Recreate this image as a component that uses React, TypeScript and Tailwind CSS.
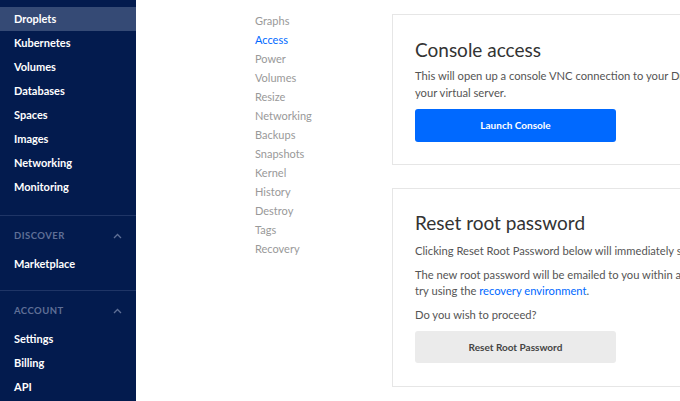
import React from "react";

const mainItems = ["Droplets", "Kubernetes", "Volumes", "Databases", "Spaces", "Images", "Networking", "Monitoring"];
const subNav = ["Graphs", "Access", "Power", "Volumes", "Resize", "Networking", "Backups", "Snapshots", "Kernel", "History", "Destroy", "Tags", "Recovery"];

function Chevron() {
  return (
    <svg width="9" height="6" viewBox="0 0 9 6" fill="none" className="mr-[14px]">
      <path d="M1 5 L4.5 1.5 L8 5" stroke="#5f6f96" strokeWidth="1.3" />
    </svg>
  );
}

function SideItem({ label, active }: { label: string; active?: boolean }) {
  return (
    <div
      className={`h-6 shrink-0 flex items-center pl-[14px] text-[11px] font-bold text-white ${active ? "bg-[#354a75]" : ""}`}
    >
      {label}
    </div>
  );
}

export default function App() {
  return (
    <div
      className="w-[680px] h-[401px] overflow-hidden flex bg-white"
      style={{ fontFamily: "Lato, 'Open Sans', sans-serif" }}
    >
      <aside className="w-[136px] shrink-0 bg-[#031b4e] pt-[7px] flex flex-col">
        {mainItems.map((m, i) => (
          <SideItem key={m} label={m} active={i === 0} />
        ))}
        <div className="shrink-0 mt-[16px] border-t border-[#1f3566]" />
        <div className="shrink-0 h-[36px] pt-[4px] flex items-center justify-between pl-[14px]">
          <span className="text-[9.5px] font-bold tracking-[0.05em] text-[#5f6f96]">DISCOVER</span>
          <Chevron />
        </div>
        <SideItem label="Marketplace" />
        <div className="shrink-0 mt-[14px] border-t border-[#1f3566]" />
        <div className="shrink-0 h-[36px] pt-[4px] flex items-center justify-between pl-[14px]">
          <span className="text-[9.5px] font-bold tracking-[0.05em] text-[#5f6f96]">ACCOUNT</span>
          <Chevron />
        </div>
        <SideItem label="Settings" />
        <SideItem label="Billing" />
        <SideItem label="API" />
      </aside>

      <nav className="w-[256px] shrink-0 pl-[119px] pt-[12px] flex flex-col">
        {subNav.map((s) => (
          <div
            key={s}
            className={`h-[19px] shrink-0 flex items-center text-[11px] ${s === "Access" ? "text-[#0069ff]" : "text-[#999999]"}`}
          >
            {s}
          </div>
        ))}
      </nav>

      <main className="flex flex-col pt-[14px] gap-[23px]">
        <section className="shrink-0 w-[320px] h-[151px] border border-[#e6e6e6] pl-[22px] pt-[25px]">
          <h2 className="text-[19px] leading-[20px] text-[#333333] font-normal">Console access</h2>
          <p className="mt-[7px] text-[11.2px] leading-[17px] text-[#555555] whitespace-nowrap">
            This will open up a console VNC connection to your Droplet, allowing you to access
            <br />
            your virtual server.
          </p>
          <button className="mt-[8px] w-[201px] h-[33px] rounded-[3px] bg-[#0069ff] text-white text-[10px] font-bold">
            Launch Console
          </button>
        </section>

        <section className="shrink-0 w-[320px] h-[199px] border border-[#e6e6e6] pl-[22px] pt-[23px]">
          <h2 className="text-[19px] leading-[22px] text-[#333333] font-normal">Reset root password</h2>
          <p className="mt-[8px] text-[11.2px] leading-[17px] text-[#555555] whitespace-nowrap">
            Clicking Reset Root Password below will immediately shut down your Droplet.
          </p>
          <p className="mt-[8px] text-[11.2px] leading-[16px] text-[#555555] whitespace-nowrap">
            The new root password will be emailed to you within a few minutes. If you do not receive it,
            <br />
            try using the <span className="text-[#0069ff]">recovery environment</span>.
          </p>
          <p className="mt-[7px] text-[11.2px] leading-[17px] text-[#555555]">Do you wish to proceed?</p>
          <button className="mt-[8px] w-[201px] h-[32px] rounded-[3px] bg-[#ebebeb] text-[#444444] text-[10px] font-bold">
            Reset Root Password
          </button>
        </section>
      </main>
    </div>
  );
}
